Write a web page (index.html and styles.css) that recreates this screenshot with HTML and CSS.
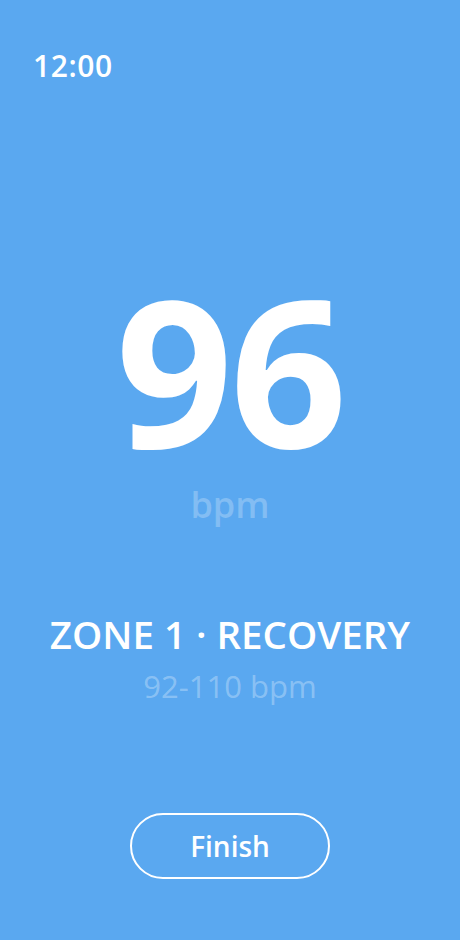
FILE: index.html
```html
<!DOCTYPE html>
<html>
<head>
<meta charset="utf-8">
<link rel="stylesheet" href="styles.css">
</head>
<body>
<div class="screen">
  <div class="time">12:00</div>
  <div class="main">
    <div class="bpm-value">96</div>
    <div class="bpm-unit">bpm</div>
  </div>
  <div class="zone">
    <div class="zone-name">ZONE 1 · RECOVERY</div>
    <div class="zone-range">92-110 bpm</div>
  </div>
  <div class="actions">
    <button class="finish">Finish</button>
  </div>
</div>
</body>
</html>
```
FILE: styles.css
```css
html, body {
  margin: 0;
  padding: 0;
}
body {
  background: #5aa8f0;
  font-family: "Open Sans", "Noto Sans", sans-serif;
  color: #fff;
}
.screen {
  width: 460px;
  height: 940px;
  display: flex;
  flex-direction: column;
  box-sizing: border-box;
  padding: 46px 0 0 0;
}
.time {
  padding-left: 33px;
  font-size: 30px;
  font-weight: 600;
  line-height: 40px;
  letter-spacing: 0.6px;
}
.main {
  margin-top: 203px;
  display: flex;
  flex-direction: column;
  align-items: center;
}
.bpm-value {
  font-size: 205px;
  font-weight: 700;
  line-height: 160px;
  letter-spacing: -3px;
}
.bpm-unit {
  margin-top: 34px;
  font-size: 36px;
  font-weight: 600;
  line-height: 44px;
  color: rgba(255, 255, 255, 0.25);
}
.zone {
  margin-top: 84px;
  display: flex;
  flex-direction: column;
  align-items: center;
}
.zone-name {
  font-size: 38.5px;
  font-weight: 600;
  line-height: 46px;
}
.zone-range {
  margin-top: 9px;
  font-size: 31px;
  font-weight: 400;
  line-height: 40px;
  color: rgba(255, 255, 255, 0.3);
}
.actions {
  margin-top: 107px;
  display: flex;
  justify-content: center;
}
.finish {
  width: 200px;
  height: 66px;
  border: 2px solid #fff;
  border-radius: 33px;
  background: transparent;
  color: #fff;
  font-family: inherit;
  font-size: 28px;
  font-weight: 600;
  padding: 0;
}
```
